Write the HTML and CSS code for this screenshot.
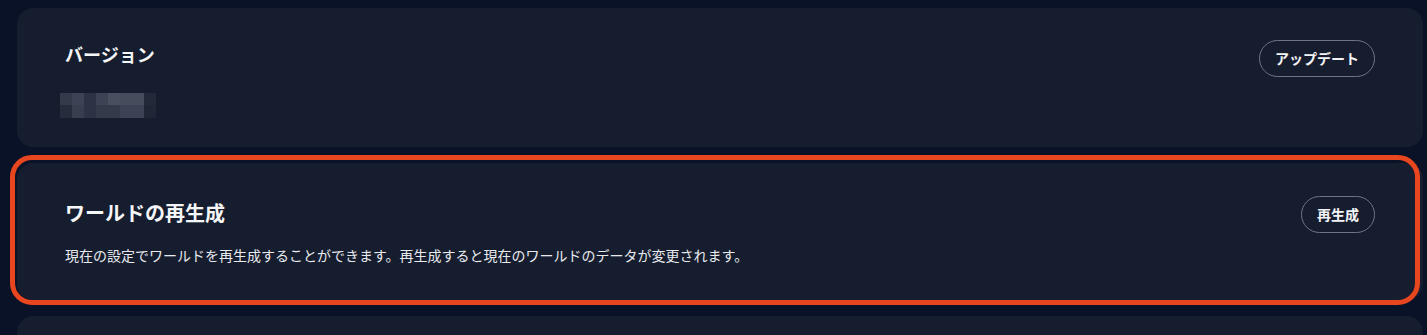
FILE: index.html
```html
<!DOCTYPE html>
<html lang="ja">
<head>
<meta charset="utf-8">
<title>設定</title>
<link rel="stylesheet" href="styles.css">
</head>
<body>
<main class="page">
  <section class="card card-version">
    <div class="card-head">
      <h2 class="title title-sm">バージョン</h2>
      <button class="pill">アップデート</button>
    </div>
    <div class="blur" aria-label="バージョン番号">
      <span class="px s3"></span><span class="px s5"></span><span class="px s2"></span><span class="px s5"></span><span class="px s7"></span><span class="px s6"></span><span class="px s6"></span><span class="px s0"></span>
      <span class="px s1"></span><span class="px s4"></span><span class="px s2"></span><span class="px s3"></span><span class="px s3"></span><span class="px s5"></span><span class="px s5"></span><span class="px s0b"></span>
    </div>
  </section>
  <section class="card card-regen">
    <div class="highlight"></div>
    <div class="card-head">
      <h2 class="title title-lg">ワールドの再生成</h2>
      <button class="pill">再生成</button>
    </div>
    <p class="desc">現在の設定でワールドを再生成することができます。再生成すると現在のワールドのデータが変更されます。</p>
  </section>
  <section class="card card-next"></section>
</main>
</body>
</html>
```
FILE: styles.css
```css
html, body {
  margin: 0;
  padding: 0;
  background: #0a1228;
  height: 100%;
  overflow: hidden;
}
body {
  font-family: "Noto Sans CJK JP", "Noto Sans", sans-serif;
  color: #f3f4f6;
}
.page {
  display: flex;
  flex-direction: column;
  gap: 16px;
  padding: 8px 4px 0 17px;
}
.card {
  background: #161d2f;
  border-radius: 16px;
  box-sizing: border-box;
  padding: 32px 48px 30px 48px;
}
.card-version {
  height: 139px;
}
.card-regen {
  position: relative;
  height: 137px;
  padding-top: 33px;
}
.card-next {
  height: 19px;
  padding: 0;
  border-radius: 16px 16px 0 0;
}
.card-head {
  display: flex;
  justify-content: space-between;
  align-items: flex-start;
}
.title {
  margin: 0;
  font-weight: 700;
  color: #f5f6f8;
}
.title-sm {
  font-size: 18px;
  line-height: 28px;
}
.title-lg {
  font-size: 20px;
  line-height: 33px;
}
.pill {
  font-family: inherit;
  font-size: 14px;
  font-weight: 700;
  line-height: 21px;
  color: #f3f4f6;
  background: transparent;
  border: 1px solid #6e7585;
  border-radius: 999px;
  padding: 7px 15px;
  margin: 0;
}
.blur {
  margin-top: 16px;
  margin-left: -5px;
  display: grid;
  grid-template-columns: repeat(8, 12px);
  grid-template-rows: 12px 13px;
  width: 96px;
}
.px { display: block; }
.s0 { background: #232939; }
.s0b { background: #202636; }
.s1 { background: #262c3c; }
.s2 { background: #2d3344; }
.s3 { background: #333a4a; }
.s4 { background: #373e4e; }
.s5 { background: #3c4354; }
.s6 { background: #454c5c; }
.s7 { background: #484f5f; }
.desc {
  margin: 12px 0 0 0;
  font-size: 14px;
  line-height: 20px;
  color: #e8eaee;
}
.highlight {
  position: absolute;
  left: -7px;
  top: -8px;
  width: 1410px;
  height: 150px;
  box-sizing: border-box;
  border: 5px solid #e8461f;
  border-radius: 22px;
  pointer-events: none;
}
```
